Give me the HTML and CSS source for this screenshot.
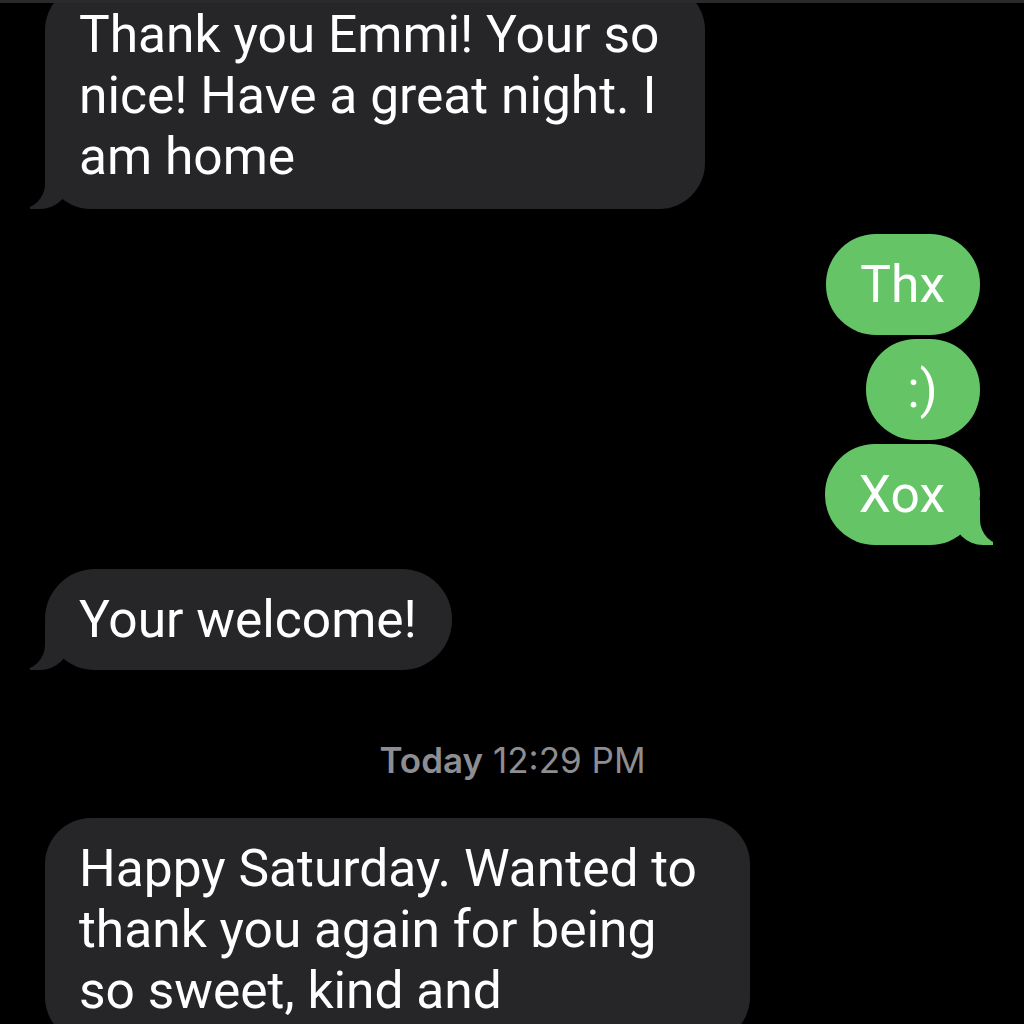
FILE: index.html
```html
<!DOCTYPE html>
<html lang="en">
<head>
    <meta charset="UTF-8">
    <meta name="viewport" content="width=device-width, initial-scale=1.0">
    <title>Messages</title>
    <link rel="stylesheet" href="styles.css">
</head>
<body>
<div class="status-edge"></div>
<div class="thread">
    <div class="bubble them multi tail first">Thank you Emmi! Your so<br>nice! Have a great night. I<br>am home</div>

    <div class="group">
        <div class="bubble me">Thx</div>
        <div class="bubble me">:)</div>
        <div class="bubble me tail">Xox</div>
    </div>

    <div class="bubble them tail">Your welcome!</div>

    <div class="timestamp"><b>Today</b> 12:29 PM</div>

    <div class="bubble them multi wide">Happy Saturday. Wanted to<br>thank you again for being<br>so sweet, kind and</div>
</div>
</body>
</html>
```

FILE: styles.css
```css
body {
  margin: 0;
  background-color: #000;
  font-family: Roboto, "Liberation Sans", sans-serif;
  overflow: hidden;
  height: 1024px;
}

.status-edge {
  height: 3px;
  background-color: #2a2a2c;
  position: relative;
  z-index: 2;
}

.thread {
  display: flex;
  flex-direction: column;
  padding: 0 44px 0 45px;
}

.bubble {
  position: relative;
  color: #fff;
  font-size: 51.5px;
  line-height: 61px;
  padding: 20px 35px 20px 34px;
  border-radius: 50px;
  width: fit-content;
  white-space: nowrap;
  box-sizing: border-box;
}

.bubble.multi {
  padding-right: 46px;
  padding-bottom: 22px;
  border-radius: 46px;
}

.bubble.wide {
  padding-right: 53px;
}

.bubble.first {
  margin-top: -19px;
}

.them {
  background-color: #262628;
  align-self: flex-start;
}

.me {
  background-color: #65c466;
  align-self: flex-end;
  min-width: 114px;
  text-align: center;
}

.group {
  display: flex;
  flex-direction: column;
  gap: 4px;
  margin: 25px 0 24px;
}

/* tail: a bubble-coloured blob, carved by a black one */
.them.tail::before,
.me.tail::before {
  content: "";
  position: absolute;
  bottom: 0;
  width: 40px;
  height: 45px;
}

.them.tail::before {
  left: -15px;
  background-color: #262628;
  border-bottom-right-radius: 30px;
}

.me.tail::before {
  right: -13px;
  background-color: #65c466;
  border-bottom-left-radius: 30px;
}

.them.tail::after,
.me.tail::after {
  content: "";
  position: absolute;
  bottom: 0;
  width: 30px;
  height: 45px;
  background-color: #000;
}

.them.tail::after {
  left: -30px;
  border-bottom-right-radius: 25px;
}

.me.tail::after {
  right: -30px;
  border-bottom-left-radius: 25px;
}

.timestamp {
  align-self: center;
  color: #8d8d92;
  font-family: Inter, "Liberation Sans", sans-serif;
  font-size: 35px;
  line-height: 40px;
  margin: 70px 0 38px;
}

.timestamp b {
  font-weight: 600;
}
```
